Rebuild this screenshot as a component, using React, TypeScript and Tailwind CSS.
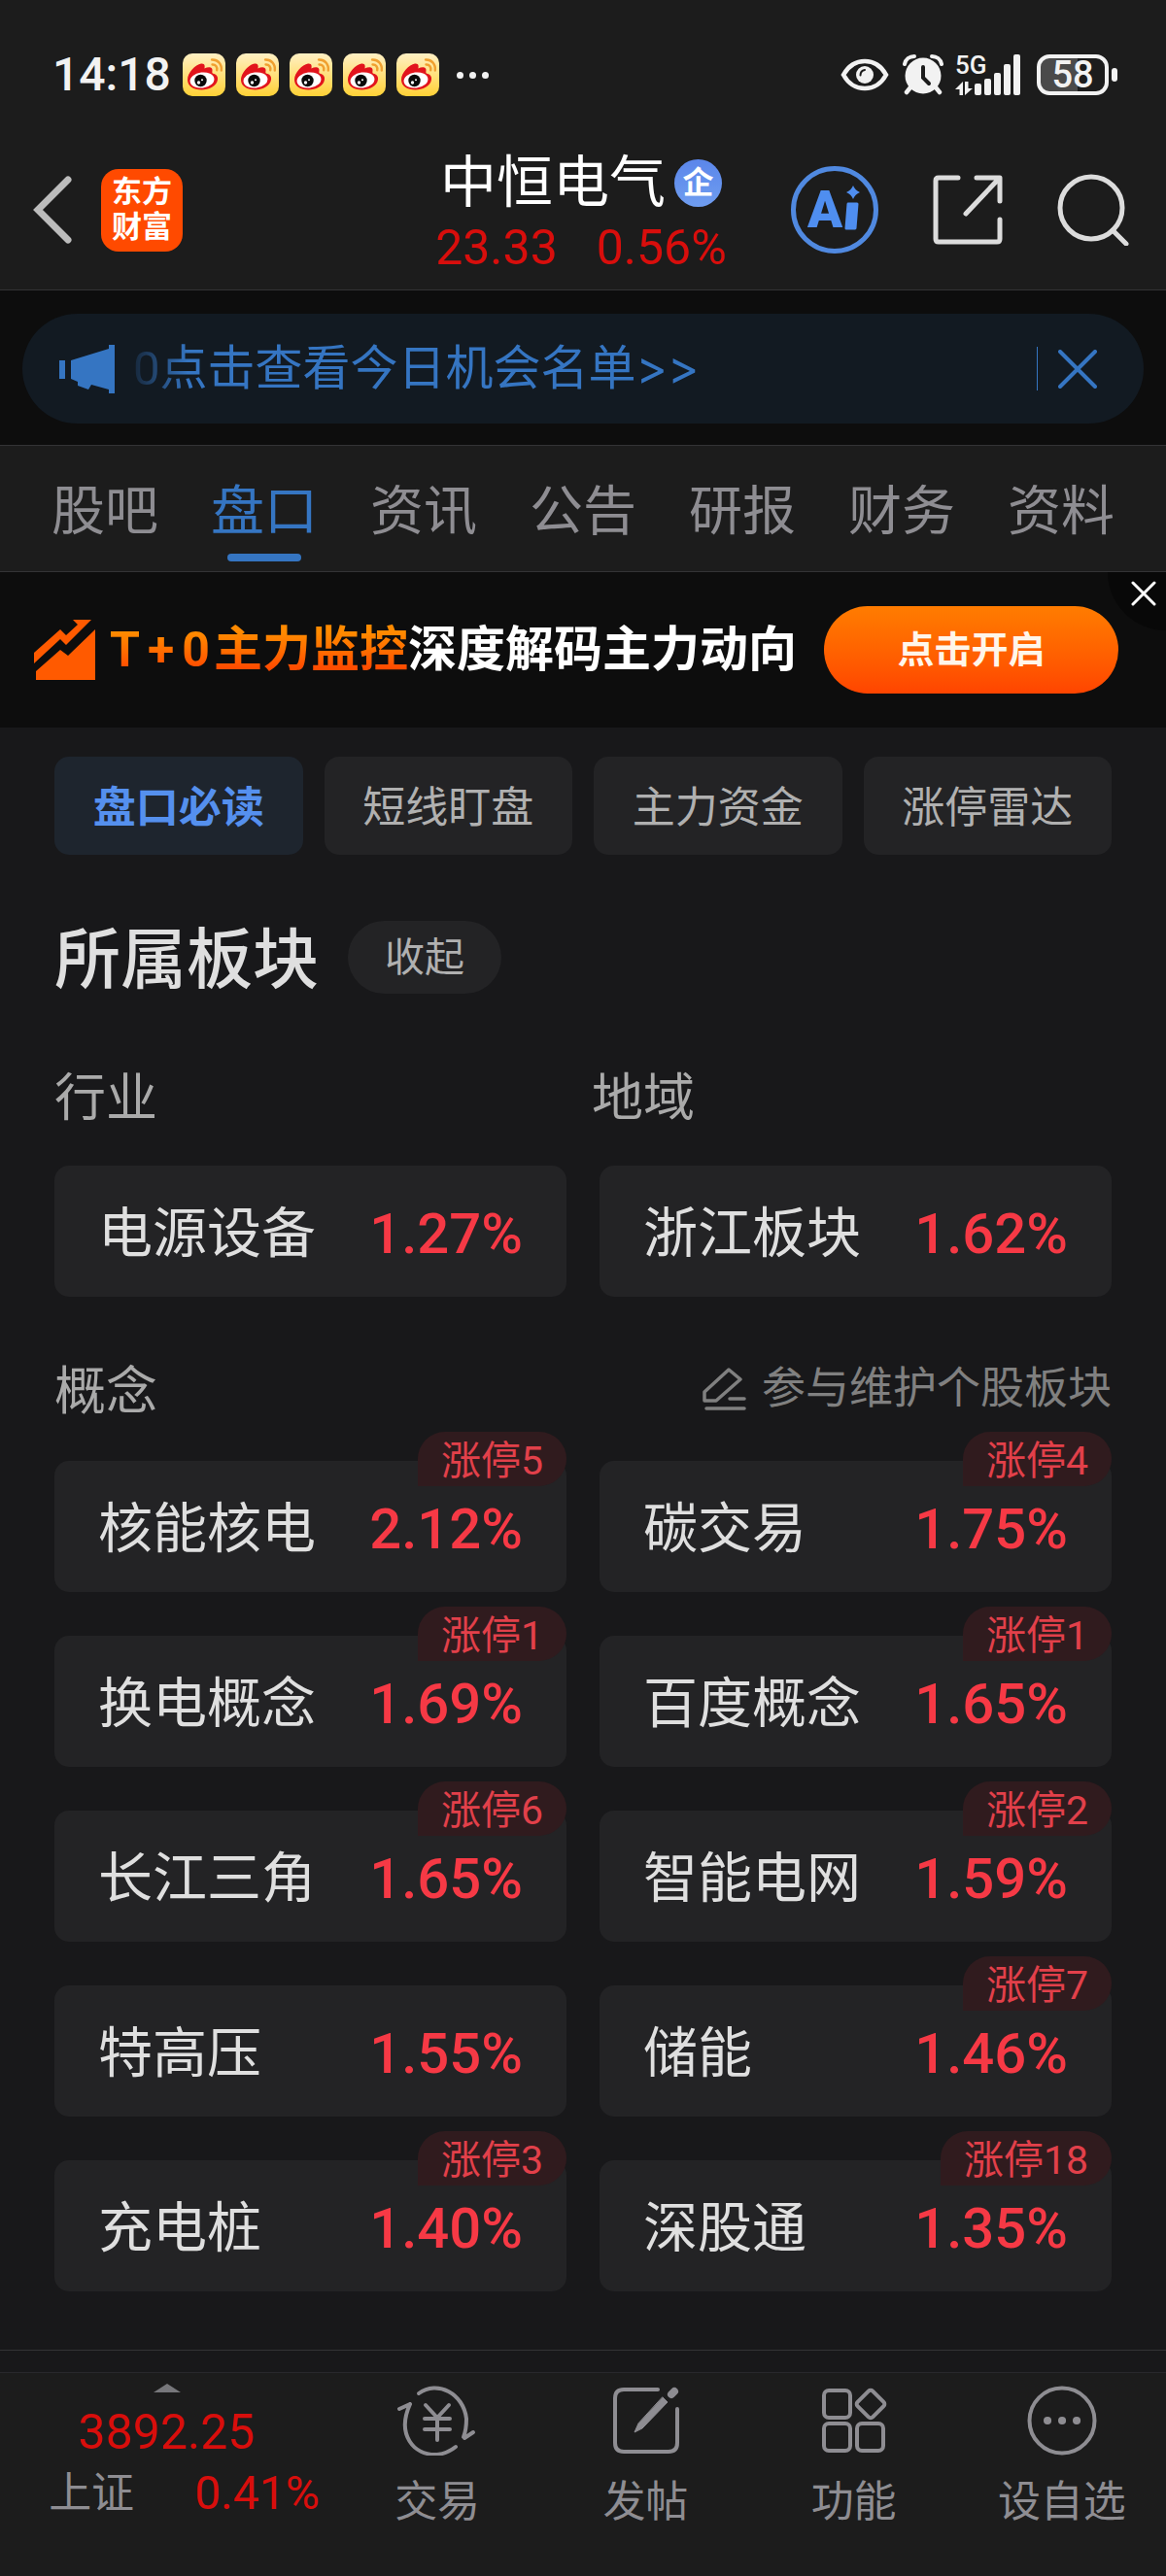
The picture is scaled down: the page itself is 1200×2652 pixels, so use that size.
import React from 'react';

interface Sector {
  name: string;
  change: string;
  limitUp?: number;
}

const TABS = ['股吧', '盘口', '资讯', '公告', '研报', '财务', '资料'];
const CHIPS = ['盘口必读', '短线盯盘', '主力资金', '涨停雷达'];

const BASE_SECTORS: Sector[] = [
  { name: '电源设备', change: '1.27%' },
  { name: '浙江板块', change: '1.62%' },
];

const CONCEPTS: Sector[] = [
  { name: '核能核电', change: '2.12%', limitUp: 5 },
  { name: '碳交易', change: '1.75%', limitUp: 4 },
  { name: '换电概念', change: '1.69%', limitUp: 1 },
  { name: '百度概念', change: '1.65%', limitUp: 1 },
  { name: '长江三角', change: '1.65%', limitUp: 6 },
  { name: '智能电网', change: '1.59%', limitUp: 2 },
  { name: '特高压', change: '1.55%' },
  { name: '储能', change: '1.46%', limitUp: 7 },
  { name: '充电桩', change: '1.40%', limitUp: 3 },
  { name: '深股通', change: '1.35%', limitUp: 18 },
];

const WeiboIcon = () => (
  <svg viewBox="0 0 44 44" className="w-11 h-11">
    <defs>
      <linearGradient id="weibo-bg" x1="0" y1="0" x2="0" y2="1">
        <stop offset="0" stopColor="#fff0c4" />
        <stop offset="1" stopColor="#ffd136" />
      </linearGradient>
    </defs>
    <rect width="44" height="44" rx="10" fill="url(#weibo-bg)" />
    <path d="M5 27C5 20 13 11.500 19 10.500c4-.6 4 3 3.400 5 4-2 9-2 8 3-.3 1.500 .2 2 2 2.600 3 1 4 3.400 3.600 6C35 34 27 37.500 19.500 37.500 11 37.500 5 33.500 5 27z" fill="#e2141c" />
    <ellipse cx="20" cy="27.500" rx="12.500" ry="8" fill="#fff" transform="rotate(-7 20 27.500)" />
    <circle cx="18.500" cy="28" r="6.200" fill="#0a0a0a" />
    <circle cx="16.500" cy="30" r="1.700" fill="#fff" />
    <circle cx="20" cy="27.300" r="1" fill="#fff" />
    <g fill="none" stroke="#f0a030" strokeWidth="2.400" strokeLinecap="round">
      <path d="M30 6.500c6-.5 10.500 4.500 9.800 11" />
      <path d="M30.500 11.500c3.400-.2 5.300 2.500 4.700 5.700" />
    </g>
  </svg>
);

const EyeIcon = () => (
  <svg viewBox="0 0 50 34" className="w-[50px] h-[34px]" fill="none">
    <path d="M3 17C8 8 16 3 25 3s17 5 22 14c-5 9-13 14-22 14S8 26 3 17z" stroke="#f2f2f2" strokeWidth="4.500" />
    <circle cx="25" cy="17" r="9" fill="#f2f2f2" />
    <path d="M20.500 17.500c0-3 1.500-5 4.500-5.500" stroke="#1c1c1c" strokeWidth="2" strokeLinecap="round" />
  </svg>
);

const AlarmIcon = () => (
  <svg viewBox="0 0 42 42" className="w-[42px] h-[42px]" fill="none">
    <circle cx="21" cy="22" r="18.500" fill="#f2f2f2" />
    <path d="M8 34l-4 5M34 34l4 5" stroke="#f2f2f2" strokeWidth="4.500" strokeLinecap="round" />
    <path d="M2 10C3 5 7 2 12 2M40 10c-1-5-5-8-10-8" stroke="#1c1c1c" strokeWidth="7" />
    <path d="M2 10C3 5 7 2 12 2M40 10c-1-5-5-8-10-8" stroke="#f2f2f2" strokeWidth="4" strokeLinecap="round" />
    <path d="M21 13v11l6 6" stroke="#1c1c1c" strokeWidth="4" strokeLinecap="round" />
  </svg>
);

const SignalIcon = () => (
  <svg viewBox="0 0 68 42" className="w-[68px] h-[42px]" fill="#f2f2f2">
    <path d="M0 36l8-8v14H4.500v-6zM18 35l-8 7V28h3.500v7z" />
    <rect x="20" y="30" width="7" height="12" rx="2" />
    <rect x="30" y="25" width="7" height="17" rx="2" />
    <rect x="40" y="19" width="7" height="23" rx="2" />
    <rect x="50" y="10" width="7" height="32" rx="2" />
    <rect x="60" y="0" width="7" height="42" rx="2" />
  </svg>
);

const StatusBar = () => (
  <div className="flex h-[144px] items-center justify-between pt-[10px] pl-[54px] pr-[50px] text-[#f2f2f2]">
    <div className="flex items-center">
      <span className="text-[48px] leading-[60px] font-medium">14:18</span>
      <div className="ml-3 flex items-center gap-[11px]">
        {[1, 2, 3, 4, 5].map((i) => (
          <WeiboIcon key={i} />
        ))}
      </div>
      <div className="ml-[18px] flex gap-[6px]">
        {[1, 2, 3].map((i) => (
          <span key={i} className="h-[7px] w-[7px] rounded-full bg-[#f2f2f2]" />
        ))}
      </div>
    </div>
    <div className="flex items-center">
      <EyeIcon />
      <span className="ml-[14px]"><AlarmIcon /></span>
      <div className="relative ml-3">
        <SignalIcon />
        <span className="absolute left-0 -top-[2px] text-[26px] leading-[26px] font-medium">5G</span>
      </div>
      <div className="ml-4 flex h-[42px] w-[74px] items-center justify-center rounded-[13px] border-4 border-[#f2f2f2] bg-linear-to-r from-[#4a4a4a] from-58% to-[#1c1c1c] to-58% text-[38px] leading-[38px] font-medium">
        58
      </div>
      <span className="ml-[3px] h-[14px] w-[6px] rounded-full bg-[#f2f2f2]" />
    </div>
  </div>
);

const NavBar = () => (
  <div className="grid h-[154px] grid-cols-[1fr_auto_1fr] items-center pb-[10px] pl-[34px] pr-[38px]">
    <div className="flex items-center gap-[30px]">
      <button aria-label="返回">
        <svg viewBox="0 0 40 70" className="w-10 h-[70px]" fill="none" stroke="#bcbcbc" strokeWidth="7" strokeLinecap="round">
          <path d="M36 4L5 35l31 31" />
        </svg>
      </button>
      <button className="flex h-[85px] w-[84px] flex-col items-center justify-center rounded-[18px] bg-[#ff4a00] text-[31px] leading-[36px] font-bold text-white">
        <span>东方</span>
        <span>财富</span>
      </button>
    </div>
    <div className="mt-[10px] flex flex-col items-center">
      <div className="flex items-center gap-[9px]">
        <h1 className="text-[58px] leading-[68px] text-white">中恒电气</h1>
        <span className="flex h-[49px] w-[49px] items-center justify-center rounded-full bg-linear-to-b from-[#5b86ea] to-[#6f9df0] text-[32px] leading-[32px] font-bold text-white">
          企
        </span>
      </div>
      <div className="flex gap-10 text-[50px] leading-[66px] text-[#d80e0c]">
        <span>23.33</span>
        <span>0.56%</span>
      </div>
    </div>
    <div className="flex items-center justify-end gap-14">
      <button aria-label="Ai">
        <svg viewBox="0 0 90 90" className="w-[90px] h-[90px]">
          <circle cx="45" cy="45" r="42.500" fill="none" stroke="#5089e0" strokeWidth="5" />
          <text x="17" y="63" fontSize="53" fontWeight="900" fill="#4f8ef0" fontFamily="Roboto">A</text>
          <path d="M59 39h9l-2 25H57z" fill="#4f8ef0" stroke="#4f8ef0" strokeWidth="3" strokeLinejoin="round" />
          <path d="M64 20q2 5 7 7-5 2-7 7-2-5-7-7 5-2 7-7z" fill="#4f8ef0" />
        </svg>
      </button>
      <button aria-label="分享">
        <svg viewBox="0 0 72 72" className="w-[72px] h-[72px]" fill="none" stroke="#dcdcdc" strokeWidth="5" strokeLinecap="round" strokeLinejoin="round">
          <path d="M26 3H6q-3 0-3 3v60q0 3 3 3h60q3 0 3-3V46" />
          <path d="M45 3h24v24M67 5L34 40" />
        </svg>
      </button>
      <button aria-label="搜索">
        <svg viewBox="0 0 74 74" className="w-[74px] h-[74px]" fill="none" stroke="#dcdcdc" strokeWidth="5" strokeLinecap="round">
          <circle cx="35" cy="35" r="32" />
          <path d="M57 58l14 14" />
        </svg>
      </button>
    </div>
  </div>
);

const Notice = () => (
  <div className="border-y border-[#333335] bg-[#0d0d0d] px-[23px] pt-6 pb-[22px]">
    <div className="flex h-[113px] items-center rounded-full bg-[#121a22] pl-[38px] pr-[48px] text-[#3575c2]">
      <svg viewBox="0 0 57 50" className="h-[50px] w-[57px] shrink-0" fill="currentColor">
        <path d="M0 16h6v19H0zM12 16L51 4V0h6v50h-6v-4l-18-5-3 5-11-4v-4l-7-3z" />
      </svg>
      <a href="#chance" className="ml-[19px] flex-1 text-[49px] leading-[60px] [mask-image:linear-gradient(to_right,rgba(0,0,0,0.15),black_56px)]">
        0点击查看今日机会名单<span className="font-[Inter]">&gt;&gt;</span>
      </a>
      <span className="h-[45px] w-px bg-[#3575c2]" />
      <button aria-label="关闭提示" className="ml-[21px]">
        <svg viewBox="0 0 40 40" className="h-10 w-10" stroke="currentColor" strokeWidth="4" strokeLinecap="round">
          <path d="M2 2l36 36M38 2L2 38" />
        </svg>
      </button>
    </div>
  </div>
);

const Tabs = () => (
  <nav className="flex border-b border-[#333335] bg-[#1c1c1c] px-[26px]">
    {TABS.map((tab) => (
      <a
        key={tab}
        href="#tab"
        className={`relative flex h-[129px] flex-1 items-center justify-center pt-1 text-[55px] leading-[64px] ${
          tab === '盘口' ? 'text-[#3575c2]' : 'text-[#8e8d92]'
        }`}
      >
        {tab}
        {tab === '盘口' && <span className="absolute bottom-[10px] h-2 w-[76px] rounded-full bg-[#3575c2]" />}
      </a>
    ))}
  </nav>
);

const Banner = () => (
  <div className="relative flex h-[160px] items-center justify-between overflow-hidden bg-[#0d0d0d] pl-[35px] pr-[49px]">
    <div className="flex items-center">
      <svg viewBox="0 0 64 62" className="h-[62px] w-16" fill="#ff5a00">
        <path d="M0 34L27 10l6 6 12-11-5-5h19L33 26l-6-6L0 45z" />
        <path d="M2 53l25-22 8 6 28-27v52H2z" />
      </svg>
      <div className="ml-[14px] flex text-[50px] leading-[60px] font-bold">
        <span className="flex bg-linear-to-b from-[#ff8a00] from-20% to-[#ff4c00] to-80% bg-clip-text text-transparent">
          <span className="mr-1 flex gap-2">
            <span>T</span>
            <span>+</span>
            <span>0</span>
          </span>
          主力监控
        </span>
        <span className="text-white">深度解码主力动向</span>
      </div>
    </div>
    <button className="h-[90px] w-[303px] rounded-full bg-linear-to-b from-[#ff7c00] to-[#ff4400] text-[38px] leading-[44px] font-bold text-[#fff6ea]">
      点击开启
    </button>
    <button aria-label="关闭广告" className="absolute right-0 top-0 h-[60px] w-[60px] rounded-bl-full bg-[#080808] pl-[24px]">
      <svg viewBox="0 0 26 26" className="-mt-4 h-[26px] w-[26px]" stroke="#fff" strokeWidth="3" strokeLinecap="round">
        <path d="M2 2l22 22M24 2L2 24" />
      </svg>
    </button>
  </div>
);

const SectorCard: React.FC<{ sector: Sector }> = ({ sector }) => (
  <button className="relative flex h-[135px] items-center justify-between rounded-[15px] bg-[#232325] px-[45px] pt-1">
    <span className="text-[56px] leading-[64px] text-[#dfdfdf]">{sector.name}</span>
    <span className="text-[58px] leading-[64px] font-medium text-[#f63945]">{sector.change}</span>
    {sector.limitUp && (
      <span className="absolute right-0 -top-[30px] h-14 rounded-[28px] rounded-bl-none bg-[#301b1e] px-6 pt-[2px] text-[41px] leading-[56px] text-[#e2404a]">
        涨停{sector.limitUp}
      </span>
    )}
  </button>
);

const Sectors = () => (
  <main className="flex-1 px-[56px] pt-[30px] pb-[60px]">
    <div className="grid grid-cols-4 gap-[22px]">
      {CHIPS.map((chip, i) => (
        <button
          key={chip}
          className={`h-[101px] rounded-[15px] pt-1 text-[44px] leading-[52px] ${
            i === 0 ? 'bg-[#1e252e] font-bold text-[#5590ee]' : 'bg-[#232325] text-[#b0b0b0]'
          }`}
        >
          {chip}
        </button>
      ))}
    </div>

    <div className="mt-[68px] flex h-[75px] items-center gap-[30px]">
      <h2 className="pt-2 text-[68px] leading-[75px] font-medium text-[#dfdfdf]">所属板块</h2>
      <button className="h-[75px] w-[158px] rounded-full bg-[#232325] text-[41px] leading-[48px] text-[#b0b0b0]">收起</button>
    </div>

    <div className="mt-[78px] grid grid-cols-2 gap-[18px] text-[53px] leading-[60px] text-[#aaaaaa]">
      <h3>行业</h3>
      <h3>地域</h3>
    </div>
    <div className="mt-[39px] grid grid-cols-2 gap-x-[34px]">
      {BASE_SECTORS.map((s) => (
        <SectorCard key={s.name} sector={s} />
      ))}
    </div>

    <div className="mt-[62px] flex items-center justify-between">
      <h3 className="pt-[6px] text-[53px] leading-[60px] text-[#aaaaaa]">概念</h3>
      <a href="#edit" className="flex items-center gap-[15px] text-[45px] leading-[52px] text-[#808080]">
        <svg viewBox="0 0 46 44" className="h-11 w-[46px]" fill="none" stroke="currentColor" strokeWidth="3.500" strokeLinecap="round" strokeLinejoin="round">
          <path d="M2 25L27 2l12 10L14 34H2zM28 32h15M4 42h39" />
        </svg>
        参与维护个股板块
      </a>
    </div>
    <div className="mt-[41px] grid grid-cols-2 gap-x-[34px] gap-y-[45px]">
      {CONCEPTS.map((s) => (
        <SectorCard key={s.name} sector={s} />
      ))}
    </div>
  </main>
);

const ACTIONS = [
  {
    label: '交易',
    icon: (
      <>
        <path d="M22 8C41-6 68 8 71 34c0 8-1 14-3 19M69 54l9-6" />
        <path d="M13 19C-1 50 16 72 41 71c8-1 14-4 19-8M13 19L2 24" />
        <path d="M29 20l12 13 12-13M41 33v23M28 34h26M28 45h26" />
      </>
    ),
  },
  {
    label: '发帖',
    icon: (
      <>
        <path d="M54 4H19Q10 4 10 13v46q0 9 9 9h46q9 0 9-9V24" />
        <path d="M59 12l5 5-26 27-8 4 4-9z" fill="currentColor" strokeWidth="1" />
        <path d="M68 9l3-3" strokeWidth="8" />
      </>
    ),
  },
  {
    label: '功能',
    icon: (
      <>
        <rect x="10" y="5" width="27" height="28" rx="5" />
        <rect x="10" y="39" width="27" height="28" rx="5" />
        <rect x="44" y="39" width="27" height="28" rx="5" />
        <rect x="47" y="8" width="22" height="22" rx="3" transform="rotate(45 58 19)" />
      </>
    ),
  },
  {
    label: '设自选',
    icon: (
      <>
        <circle cx="41" cy="36" r="33.500" />
        <path d="M26 36h.1M41 36h.1M56 36h.1" strokeWidth="8" />
      </>
    ),
  },
];

const BottomBar = () => (
  <footer className="flex h-[210px] border-t border-[#28282c] bg-[#1c1c1c] text-[#8e8d92]">
    <button className="flex w-[343px] flex-col items-center pt-[11px]">
      <svg viewBox="0 0 28 9" className="h-[9px] w-7" fill="#77777b">
        <path d="M14 0l14 9H0z" />
      </svg>
      <span className="mt-[11px] text-[50px] leading-[60px] text-[#d80e0c]">3892.25</span>
      <span className="mt-[3px] flex items-center gap-[62px] pl-9 text-[44px] leading-[60px]">
        上证
        <span className="text-[48px] text-[#d80e0c]">0.41%</span>
      </span>
    </button>
    {ACTIONS.map((a) => (
      <button key={a.label} className="flex flex-1 flex-col items-center pt-[13px] text-[44px] leading-[60px]">
        <svg viewBox="0 0 82 72" className="h-[72px] w-[82px]" fill="none" stroke="currentColor" strokeWidth="4" strokeLinecap="round" strokeLinejoin="round">
          {a.icon}
        </svg>
        <span className="mt-[18px]">{a.label}</span>
      </button>
    ))}
  </footer>
);

export default function App() {
  return (
    <div className="flex min-h-screen flex-col bg-[#18181a] font-[Roboto,'Noto_Sans_CJK_SC',sans-serif]">
      <header className="bg-[#1c1c1c]">
        <StatusBar />
        <NavBar />
      </header>
      <Notice />
      <Tabs />
      <Banner />
      <Sectors />
      <div className="h-[23px] border-t border-[#333335]" />
      <BottomBar />
    </div>
  );
}
